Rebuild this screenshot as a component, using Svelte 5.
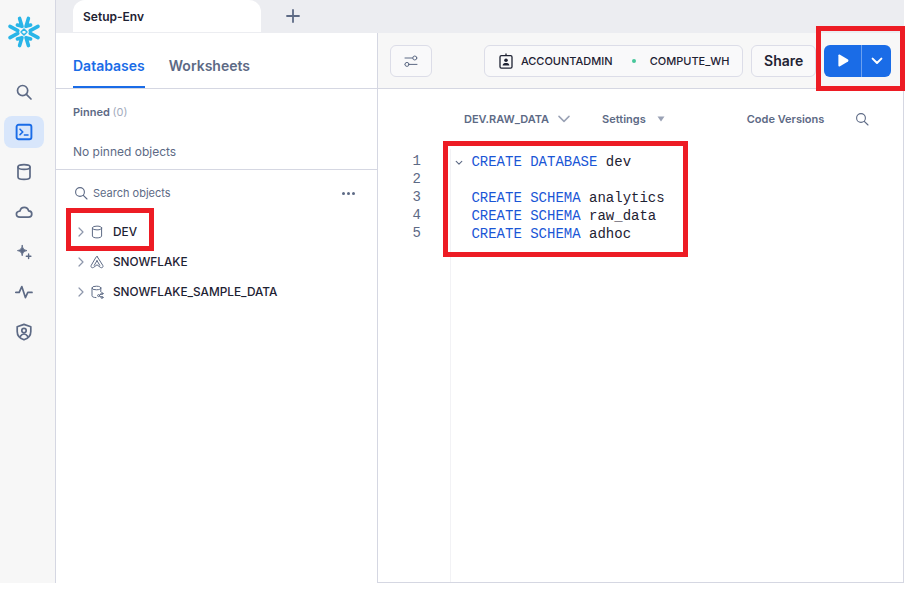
<script lang="ts">
  const lineHeight = 18;

  const code = [
    { kw: 'CREATE DATABASE', name: 'dev', fold: true },
    { kw: '', name: '' },
    { kw: 'CREATE SCHEMA', name: 'analytics' },
    { kw: 'CREATE SCHEMA', name: 'raw_data' },
    { kw: 'CREATE SCHEMA', name: 'adhoc' }
  ];

  const navItems = ['search', 'terminal', 'database', 'cloud', 'sparkle', 'pulse', 'shield'];

  const objects = [
    { label: 'DEV', icon: 'db' },
    { label: 'SNOWFLAKE', icon: 'share' },
    { label: 'SNOWFLAKE_SAMPLE_DATA', icon: 'sample' }
  ];
</script>

<div class="app">
  <aside class="rail">
    <div class="logo">
      <svg width="34" height="34" viewBox="0 0 34 34" fill="none" stroke="#29b5e8" stroke-width="3.6" stroke-linecap="round" stroke-linejoin="round">
        <!-- top and bottom pairs -->
        <path d="M12.6 3.4 L15 11.4 L10.4 10 M21.4 3.4 L19 11.4 L23.6 10" />
        <path d="M12.6 30.6 L15 22.6 L10.4 24 M21.4 30.6 L19 22.6 L23.6 24" />
        <!-- side chevrons -->
        <path d="M3 11.4 L10.8 15.6 M3 22.6 L10.8 18.4" />
        <path d="M31 11.4 L23.2 15.6 M31 22.6 L23.2 18.4" />
        <path d="M17 14 L20 17 L17 20 L14 17 Z" stroke-width="1.5" />
      </svg>
    </div>
    <nav class="nav">
      {#each navItems as item}
        <div class="nav-item" class:active={item === 'terminal'}>
          <svg width="18" height="18" viewBox="0 0 18 18" fill="none" stroke="currentColor" stroke-width="1.7" stroke-linecap="round" stroke-linejoin="round">
            {#if item === 'search'}
              <circle cx="7.6" cy="7.6" r="5.1" /><path d="M11.4 11.4 L16 16" />
            {:else if item === 'terminal'}
              <rect x="1.6" y="1.8" width="14.8" height="14.4" rx="2" stroke-width="1.9" />
              <path d="M5 6.2 L7.8 9 L5 11.6 M9.4 12 H13" stroke-width="1.6" />
            {:else if item === 'database'}
              <ellipse cx="9" cy="4" rx="6" ry="2.4" />
              <path d="M3 4 V14 C3 15.4 5.7 16.4 9 16.4 C12.3 16.4 15 15.4 15 14 V4" />
            {:else if item === 'cloud'}
              <path d="M5 14.2 H13.4 C15.4 14.2 16.8 12.8 16.8 11 C16.8 9.2 15.4 8 13.7 7.9 C13 5.6 11.4 4.4 9.4 4.4 C7.2 4.4 5.4 5.9 5 8 C2.8 8.2 1.4 9.4 1.4 11.1 C1.4 12.9 2.9 14.2 5 14.2 Z" />
            {:else if item === 'sparkle'}
              <path d="M7.2 2.4 C7.8 5.8 8.8 6.9 12 7.6 C8.8 8.3 7.8 9.4 7.2 12.8 C6.6 9.4 5.6 8.3 2.4 7.6 C5.6 6.9 6.6 5.8 7.2 2.4 Z" fill="currentColor" stroke-width="0.8" />
              <path d="M13.6 11 V15.6 M11.3 13.3 H15.9" stroke-width="1.4" />
            {:else if item === 'pulse'}
              <path d="M0.8 9.4 H4.2 L6.8 3.6 L10.4 14.6 L12.8 9.4 H17" />
            {:else}
              <path d="M9 1.4 L15.8 3.8 V8.4 C15.8 12.4 13 15.4 9 16.8 C5 15.4 2.2 12.4 2.2 8.4 V3.8 Z" />
              <circle cx="9" cy="7.6" r="2.2" />
              <path d="M5.4 13.2 C6.4 11.6 7.6 11 9 11 C10.4 11 11.6 11.6 12.6 13.2" />
            {/if}
          </svg>
        </div>
      {/each}
    </nav>
  </aside>

  <div class="main">
    <header class="tabstrip">
      <div class="tab">Setup-Env</div>
      <svg class="plus" width="14" height="14" viewBox="0 0 14 14" stroke="#5d6a85" stroke-width="1.8" stroke-linecap="round">
        <path d="M7 1 V13 M1 7 H13" />
      </svg>
    </header>

    <div class="panes">
      <section class="objects">
        <div class="object-tabs">
          <span class="object-tab selected">Databases</span>
          <span class="object-tab">Worksheets</span>
        </div>

        <div class="pinned">
          <div class="pinned-title">Pinned <span>(0)</span></div>
          <div class="pinned-empty">No pinned objects</div>
        </div>

        <div class="search-row">
          <svg width="14" height="14" viewBox="0 0 14 14" fill="none" stroke="#5d6a85" stroke-width="1.1" stroke-linecap="round">
            <circle cx="6" cy="6" r="4.4" /><path d="M9.3 9.3 L13 13" />
          </svg>
          <span class="search-text">Search objects</span>
          <span class="dots"><i></i><i></i><i></i></span>
        </div>

        <ul class="tree">
          {#each objects as obj}
            <li>
              <svg class="chev" width="8" height="10" viewBox="0 0 8 10" fill="none" stroke="#8d96ab" stroke-width="1.2" stroke-linecap="round" stroke-linejoin="round">
                <path d="M2 1 L6 5 L2 9" />
              </svg>
              <svg class="obj-icon" width="14" height="14" viewBox="0 0 14 14" fill="none" stroke="#5d6a85" stroke-width="1" stroke-linecap="round" stroke-linejoin="round">
                {#if obj.icon === 'db'}
                  <ellipse cx="7" cy="3" rx="4.6" ry="1.9" />
                  <path d="M2.4 3 V11 C2.4 12.1 4.4 12.9 7 12.9 C9.6 12.9 11.6 12.1 11.6 11 V3" />
                {:else if obj.icon === 'share'}
                  <path d="M7.2 1.6 L12.8 10.4 C13.6 12 12 13.4 10.4 12.4 L7 9.8 L3.6 12.4 C2 13.4 0.4 12 1.2 10.4 L6 2.2 C6.3 1.6 6.8 1.4 7.2 1.6 Z" />
                  <path d="M7 5.6 L4.2 10.4 M7 5.6 L9.8 10.4" />
                {:else}
                  <ellipse cx="6.4" cy="3" rx="4.4" ry="1.8" />
                  <path d="M2 3 V10.8 C2 11.8 3.6 12.5 6 12.6 M10.8 3 V6.6" />
                  <circle cx="12" cy="8.6" r="1" /><circle cx="8.6" cy="10.6" r="1" /><circle cx="12" cy="12.4" r="1" />
                  <path d="M9.5 10.1 L11.1 9.1 M9.5 11.1 L11.1 12" />
                {/if}
              </svg>
              <span>{obj.label}</span>
            </li>
          {/each}
        </ul>
      </section>

      <section class="editor">
        <div class="toolbar">
          <button class="btn filter" aria-label="Filters">
            <svg width="14" height="14" viewBox="0 0 14 14" fill="none" stroke="#5d6a85" stroke-width="1" stroke-linecap="round">
              <path d="M1 4 H8.6 M1 10.4 H5" /><circle cx="10.8" cy="4" r="2" /><circle cx="3" cy="10.4" r="2" fill="#f7f7f7" /><path d="M5 10.4 H13" />
            </svg>
          </button>
          <div class="context">
            <svg width="14" height="16" viewBox="0 0 14 16" fill="none" stroke="#1e2233" stroke-width="1.3" stroke-linejoin="round">
              <rect x="1" y="2.6" width="12" height="12.6" rx="1.4" />
              <path d="M7 0.4 V2.6" />
              <circle cx="7" cy="7.2" r="1.8" fill="#1e2233" stroke="none" />
              <path d="M3.6 12.6 C3.8 10.6 5.2 10 7 10 C8.8 10 10.2 10.6 10.4 12.6 Z" fill="#1e2233" stroke="none" />
            </svg>
            <span class="role">ACCOUNTADMIN</span>
            <i class="status"></i>
            <span class="warehouse">COMPUTE_WH</span>
          </div>
          <button class="btn share">Share</button>
          <div class="run">
            <button class="run-main" aria-label="Run">
              <svg width="12" height="13" viewBox="0 0 12 13" fill="#fff"><path d="M1.4 1.2 C1.4 0.5 2 0.2 2.6 0.5 L11 5.6 C11.6 6 11.6 7 11 7.4 L2.6 12.5 C2 12.8 1.4 12.5 1.4 11.8 Z" /></svg>
            </button>
            <button class="run-more" aria-label="More">
              <svg width="12" height="8" viewBox="0 0 12 8" fill="none" stroke="#fff" stroke-width="2" stroke-linecap="round" stroke-linejoin="round"><path d="M1.6 1.6 L6 6 L10.4 1.6" /></svg>
            </button>
          </div>
        </div>

        <div class="subbar">
          <span class="sub-label">DEV.RAW_DATA</span>
          <svg class="sub-chev" width="12" height="8" viewBox="0 0 12 8" fill="none" stroke="#9aa2b5" stroke-width="1.5" stroke-linecap="round" stroke-linejoin="round"><path d="M1 1.4 L6 6.4 L11 1.4" /></svg>
          <span class="sub-label settings">Settings</span>
          <svg class="sub-tri" width="8" height="6" viewBox="0 0 8 6" fill="#9aa2b5"><path d="M0.5 0.5 H7.5 L4 5.5 Z" /></svg>
          <span class="sub-label versions">Code Versions</span>
          <svg class="sub-search" width="14" height="14" viewBox="0 0 14 14" fill="none" stroke="#5d6a85" stroke-width="1.1" stroke-linecap="round">
            <circle cx="6" cy="6" r="4.4" /><path d="M9.3 9.3 L13 13" />
          </svg>
        </div>

        <div class="code-area">
          <div class="gutter">
            {#each code as line, i}
              <div class="num" style="height: {lineHeight}px">{i + 1}</div>
            {/each}
          </div>
          <div class="code">
            {#each code as line}
              <div class="code-line" style="height: {lineHeight}px">
                {#if line.fold}
                  <svg class="fold" width="8" height="6" viewBox="0 0 8 6" fill="none" stroke="#5d6a85" stroke-width="1.1" stroke-linecap="round" stroke-linejoin="round"><path d="M1.2 1.4 L4 4.2 L6.8 1.4" /></svg>
                {/if}
                {#if line.kw}<span class="kw">{line.kw}</span> {line.name}{/if}
              </div>
            {/each}
          </div>
        </div>
      </section>
    </div>
  </div>

  <!-- red annotation boxes lying over the screenshot -->
  <div class="mark mark-dev"></div>
  <div class="mark mark-code"></div>
  <div class="mark mark-run"></div>
</div>

<style>
  :global(body) {
    margin: 0;
    background: #fff;
  }

  .app {
    position: relative;
    display: flex;
    width: 904px;
    height: 583px;
    font-family: Inter, "Liberation Sans", sans-serif;
    color: #1e2233;
  }

  .rail {
    width: 55px;
    flex: none;
    background: #f7f7f7;
    border-right: 1px solid #d5d7e2;
  }

  .logo {
    display: flex;
    justify-content: center;
    padding-top: 15px;
    padding-right: 7px;
    height: 60px;
    box-sizing: border-box;
  }

  .nav {
    display: flex;
    flex-direction: column;
    gap: 8px;
    padding: 16px 11px 0 4px;
  }

  .nav-item {
    width: 40px;
    height: 32px;
    display: flex;
    align-items: center;
    justify-content: center;
    border-radius: 8px;
    color: #5d6a85;
  }

  .nav-item.active {
    background: #d8e6fb;
    color: #1a6ce7;
  }

  .main {
    flex: 1;
    min-width: 0;
    display: flex;
    flex-direction: column;
  }

  .tabstrip {
    height: 33px;
    flex: none;
    display: flex;
    align-items: flex-start;
    background: #ecedf1;
    padding-left: 17px;
  }

  .tab {
    width: 178px;
    height: 32px;
    padding-left: 10px;
    background: #fff;
    border-radius: 12px 12px 0 0;
    font-size: 12px;
    font-weight: 600;
    line-height: 33px;
  }

  .plus {
    margin: 9px 0 0 25px;
  }

  .panes {
    flex: 1;
    display: flex;
    min-height: 0;
  }

  .objects {
    width: 321px;
    flex: none;
    border-right: 1px solid #d5d7e2;
  }

  .object-tabs {
    height: 56px;
    box-sizing: border-box;
    display: flex;
    gap: 24px;
    padding-left: 17px;
    border-bottom: 1px solid #d5d7e2;
  }

  .object-tab {
    height: 55px;
    box-sizing: border-box;
    font-size: 14px;
    font-weight: 600;
    line-height: 65px;
    color: #5d6a85;
  }

  .object-tab.selected {
    color: #1a6ce7;
    border-bottom: 2px solid #1a6ce7;
  }

  .pinned {
    height: 81px;
    padding: 15px 0 0 17px;
    box-sizing: border-box;
    border-bottom: 1px solid #d5d7e2;
  }

  .pinned-title {
    font-size: 11px;
    font-weight: 600;
    line-height: 16px;
    color: #5d6a85;
  }

  .pinned-title span {
    font-weight: 400;
    color: #a3abbd;
  }

  .pinned-empty {
    margin-top: 24px;
    font-size: 12px;
    line-height: 16px;
    color: #5d6a85;
  }

  .search-row {
    display: flex;
    align-items: center;
    height: 16px;
    margin-top: 15px;
    padding: 0 22px 0 18px;
  }

  .search-text {
    margin-left: 5px;
    font-size: 11px;
    color: #5d6a85;
  }

  .dots {
    margin-left: auto;
    display: flex;
    gap: 2px;
  }

  .dots i {
    width: 3px;
    height: 3px;
    border-radius: 50%;
    background: #5d6a85;
  }

  .tree {
    list-style: none;
    margin: 16px 0 0;
    padding: 0 0 0 21px;
  }

  .tree li {
    height: 30px;
    display: flex;
    align-items: center;
    font-size: 11.8px;
    font-weight: 500;
    color: #1e2233;
  }

  .obj-icon {
    margin-left: 5px;
  }

  .tree span {
    margin-left: 9px;
  }

  .editor {
    flex: 1;
    min-width: 0;
    display: flex;
    flex-direction: column;
    border-right: 1px solid #d5d7e2;
    border-bottom: 1px solid #d5d7e2;
  }

  .toolbar {
    height: 56px;
    flex: none;
    box-sizing: border-box;
    display: flex;
    align-items: center;
    padding: 0 12px;
    background: #f7f7f7;
    border-bottom: 1px solid #d5d7e2;
  }

  .btn {
    height: 32px;
    box-sizing: border-box;
    background: #f9f9fa;
    border: 1px solid #dcdde8;
    border-radius: 6px;
    padding: 0;
    font-family: inherit;
  }

  .filter {
    width: 42px;
    display: flex;
    align-items: center;
    justify-content: center;
  }

  .context {
    width: 260px;
    height: 32px;
    margin-left: 52px;
    box-sizing: border-box;
    display: flex;
    align-items: center;
    padding-left: 14px;
    background: #f9f9fa;
    border: 1px solid #dcdde8;
    border-radius: 6px;
    font-size: 11px;
    font-weight: 500;
  }

  .role {
    margin-left: 8px;
  }

  .status {
    width: 4px;
    height: 4px;
    margin-left: 19px;
    border-radius: 50%;
    background: #47c79a;
  }

  .warehouse {
    margin-left: 14px;
  }

  .share {
    width: 65px;
    margin-left: 8px;
    font-size: 14px;
    font-weight: 600;
    color: #1e2233;
  }

  .run {
    display: flex;
    height: 32px;
    width: 67px;
    margin-left: 8px;
    border-radius: 6px;
    overflow: hidden;
    background: #1a6ce7;
  }

  .run button {
    border: 0;
    padding: 0;
    background: none;
    display: flex;
    align-items: center;
    justify-content: center;
  }

  .run .run-main {
    width: 38px;
    border-right: 1px solid #6ba0ef;
  }

  .run-more {
    flex: 1;
  }

  .subbar {
    height: 60px;
    flex: none;
    box-sizing: border-box;
    display: flex;
    align-items: center;
    padding-left: 86px;
    padding-bottom: 1px;
  }

  .sub-label {
    font-size: 11px;
    font-weight: 600;
    color: #5d6a85;
  }

  .sub-chev {
    margin-left: 9px;
  }

  .settings {
    margin-left: 32px;
  }

  .sub-tri {
    margin-left: 11px;
  }

  .versions {
    margin-left: 82px;
  }

  .sub-search {
    margin-left: 31px;
  }

  .code-area {
    flex: 1;
    display: flex;
    min-height: 0;
    font-family: "Liberation Mono", monospace;
    font-size: 14px;
  }

  .gutter {
    width: 73px;
    flex: none;
    box-sizing: border-box;
    padding: 3px 29px 0 0;
    border-right: 1px solid #f2f2f5;
    text-align: right;
    color: #5d6a85;
  }

  .num,
  .code-line {
    line-height: 18px;
  }

  .code {
    position: relative;
    padding: 4px 0 0 21px;
    color: #1e2233;
  }

  .code-line {
    position: relative;
    white-space: pre;
    margin-left: -9px;
  }

  .kw {
    color: #1a56d6;
  }

  .fold {
    position: absolute;
    left: -8px;
    top: 7px;
  }

  .mark {
    position: absolute;
    box-sizing: border-box;
    border: 5px solid #ed1c24;
    pointer-events: none;
  }

  .mark-dev {
    left: 66px;
    top: 208px;
    width: 88px;
    height: 43px;
  }

  .mark-code {
    left: 443px;
    top: 141px;
    width: 245px;
    height: 116px;
  }

  .mark-run {
    left: 816px;
    top: 26px;
    width: 89px;
    height: 65px;
  }
</style>
